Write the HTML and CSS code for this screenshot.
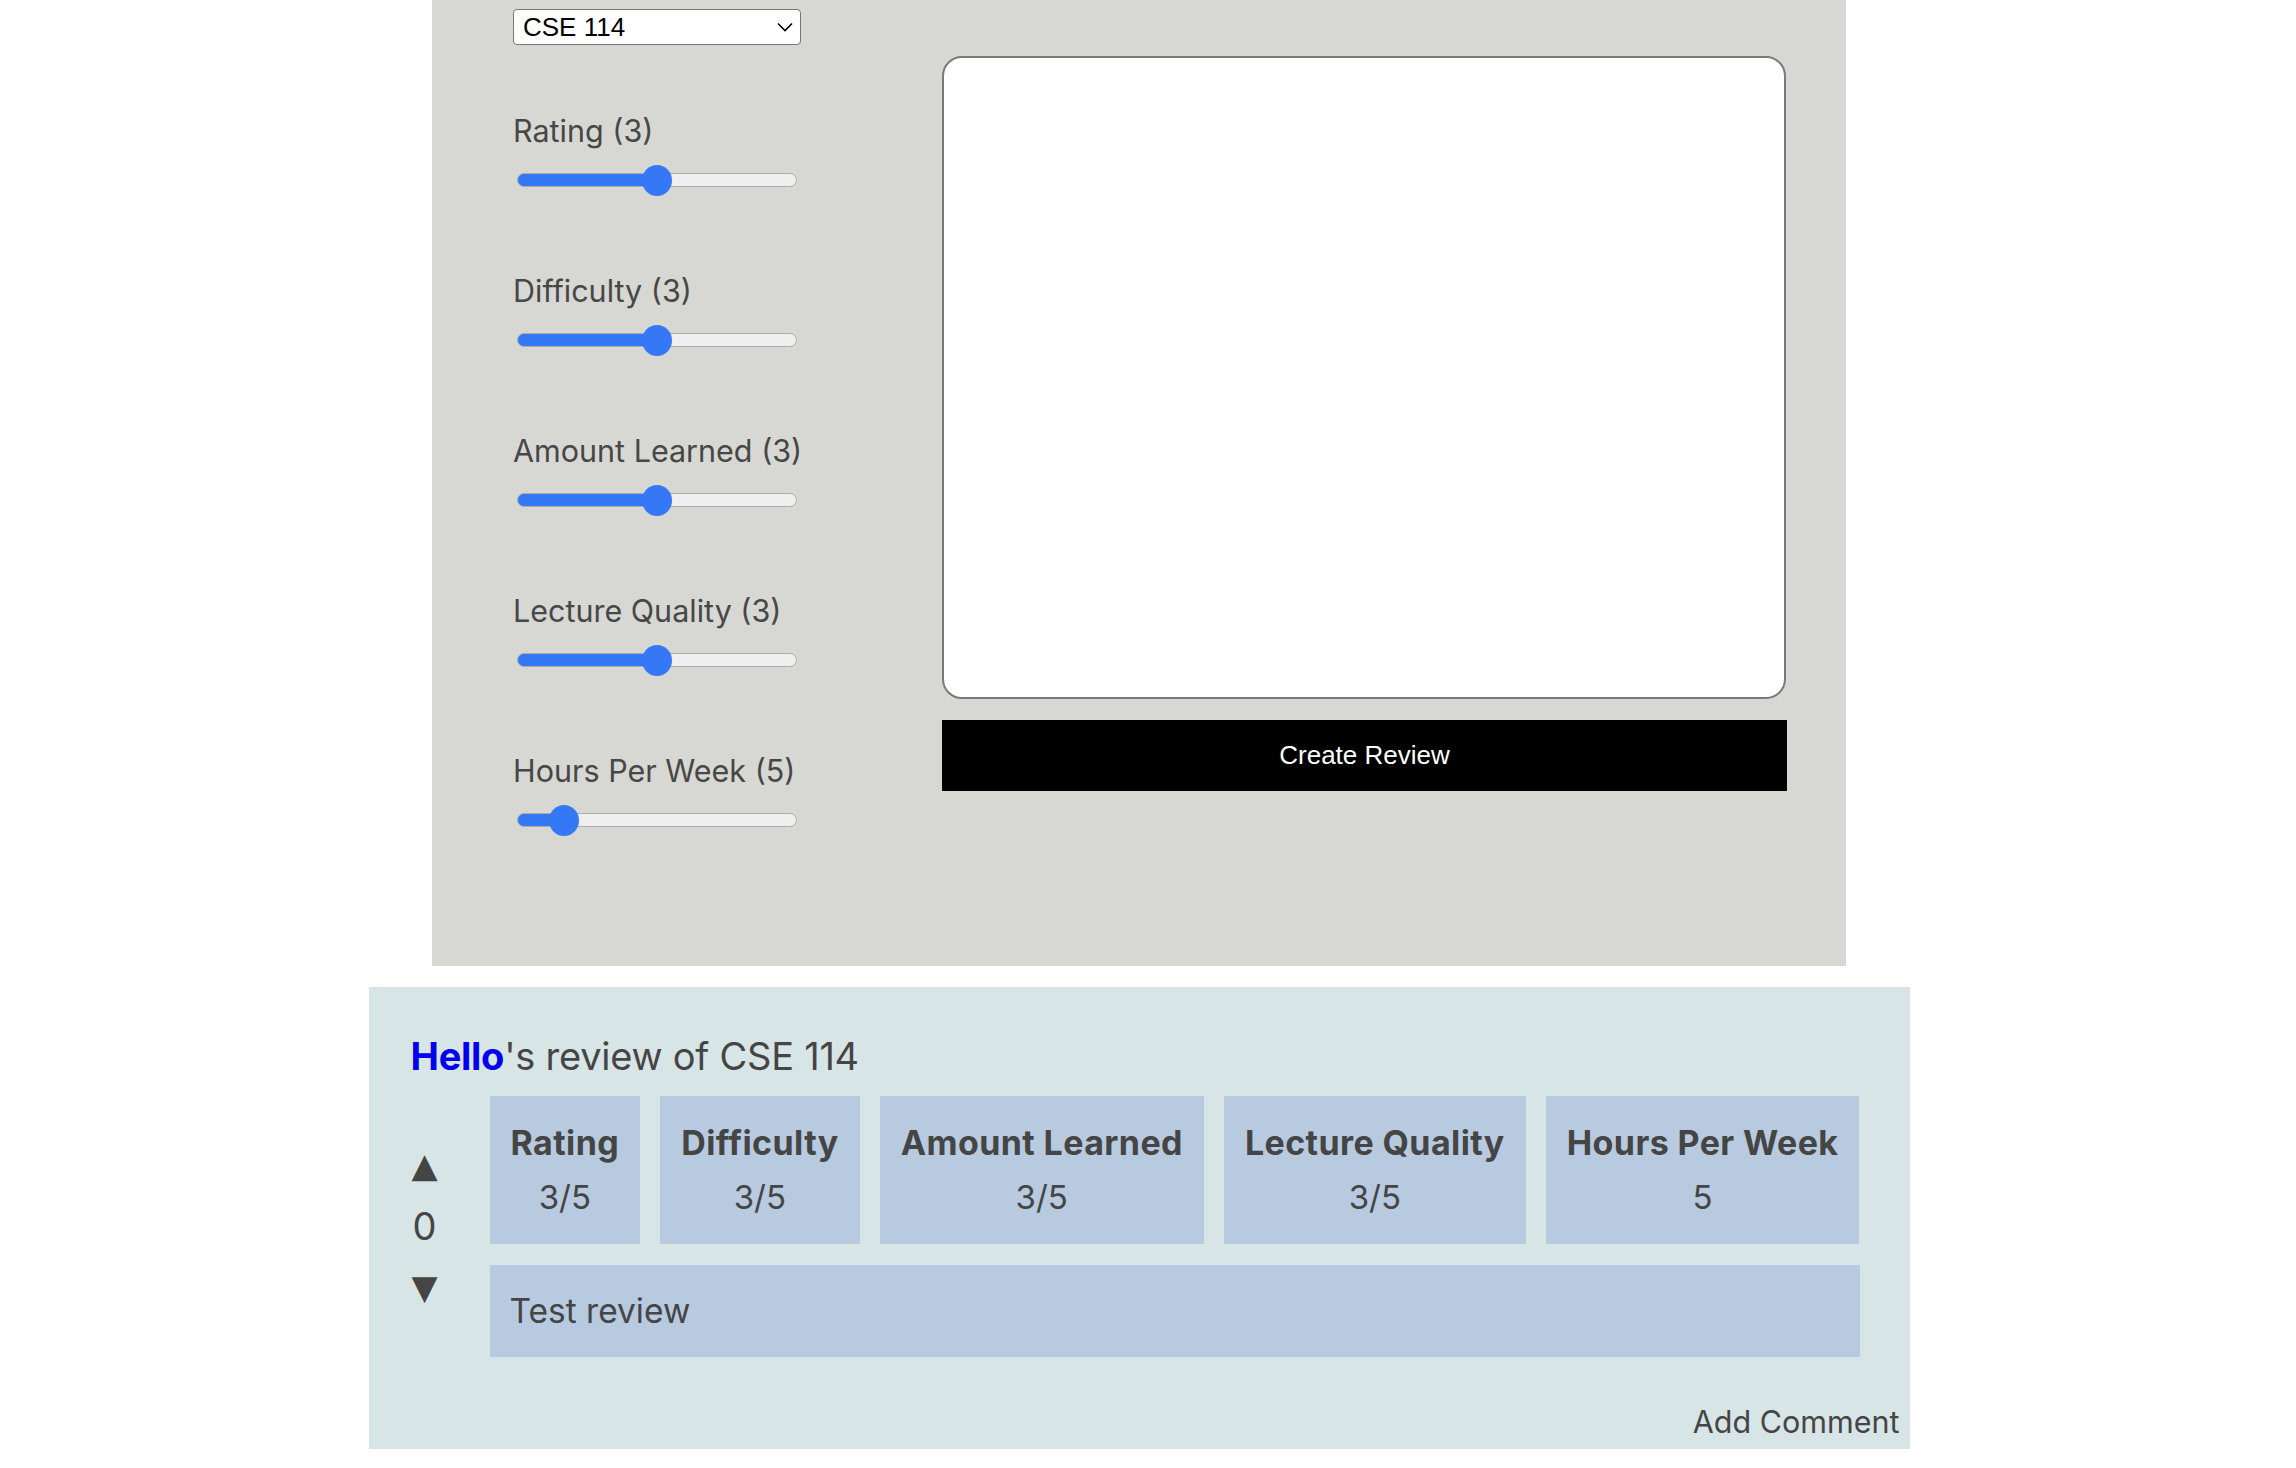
FILE: index.html
```html
<!DOCTYPE html>
<html lang="en">
<head>
<meta charset="utf-8">
<title>Course Review</title>
<link rel="stylesheet" href="styles.css">
</head>
<body>
<div class="page">
  <section class="form-panel">
    <div class="controls">
      <div class="select-wrap">
        <select class="course-select">
          <option>CSE 114</option>
        </select>
        <svg class="chevron" width="16" height="10" viewBox="0 0 16 10"><path d="M1 1.5 L8 8.5 L15 1.5" fill="none" stroke="#000" stroke-width="1.6"/></svg>
      </div>
      <div class="fields">
        <div class="field">
          <label class="field-label">Rating (3)</label>
          <input class="slider" type="range" min="1" max="5" value="3" style="--fill:50%">
        </div>
        <div class="field">
          <label class="field-label">Difficulty (3)</label>
          <input class="slider" type="range" min="1" max="5" value="3" style="--fill:50%">
        </div>
        <div class="field">
          <label class="field-label">Amount Learned (3)</label>
          <input class="slider" type="range" min="1" max="5" value="3" style="--fill:50%">
        </div>
        <div class="field">
          <label class="field-label">Lecture Quality (3)</label>
          <input class="slider" type="range" min="1" max="5" value="3" style="--fill:50%">
        </div>
        <div class="field">
          <label class="field-label">Hours Per Week (5)</label>
          <input class="slider" type="range" min="0" max="40" value="5" style="--fill:16.5%">
        </div>
      </div>
    </div>
    <div class="compose">
      <textarea class="review-text"></textarea>
      <button class="create-btn">Create Review</button>
    </div>
  </section>

  <section class="review-card">
    <h2 class="review-title"><a class="author">Hello</a>'s review of CSE 114</h2>
    <div class="review-body">
      <div class="votes">
        <div class="vote-arrow">&#9650;</div>
        <div class="vote-count">0</div>
        <div class="vote-arrow">&#9660;</div>
      </div>
      <div class="review-content">
        <div class="stats">
          <div class="stat"><div class="stat-label">Rating</div><div class="stat-value">3/5</div></div>
          <div class="stat"><div class="stat-label">Difficulty</div><div class="stat-value">3/5</div></div>
          <div class="stat"><div class="stat-label">Amount Learned</div><div class="stat-value">3/5</div></div>
          <div class="stat"><div class="stat-label">Lecture Quality</div><div class="stat-value">3/5</div></div>
          <div class="stat"><div class="stat-label">Hours Per Week</div><div class="stat-value">5</div></div>
        </div>
        <div class="review-message">Test review</div>
      </div>
    </div>
    <div class="add-comment">Add Comment</div>
  </section>
</div>
</body>
</html>
```

FILE: styles.css
```css
* { box-sizing: border-box; }

body {
  margin: 0;
  background: #ffffff;
  font-family: Inter, "Noto Sans", sans-serif;
  color: #454545;
}

.page {
  width: 2278px;
}

/* ---------- form panel ---------- */
.form-panel {
  width: 1414px;
  margin: 0 auto;
  background: #d7d8d3;
  display: flex;
  padding: 9px 60px 130px 81px;
}

.controls {
  width: 288px;
  display: flex;
  flex-direction: column;
}

.select-wrap {
  position: relative;
  width: 288px;
  height: 36px;
}

.course-select {
  appearance: none;
  -webkit-appearance: none;
  width: 288px;
  height: 36px;
  border: 1px solid #767676;
  border-radius: 4px;
  background: #ffffff;
  font-family: "Liberation Sans", Arial, sans-serif;
  font-size: 26px;
  color: #000;
  padding: 0 0 0 9px;
  margin: 0;
}

.chevron {
  position: absolute;
  right: 8px;
  top: 13px;
  pointer-events: none;
}

.fields {
  margin-top: 66px;
  display: flex;
  flex-direction: column;
  gap: 75px;
}

.field {
  display: flex;
  flex-direction: column;
}

.field-label {
  font-size: 30.5px;
  line-height: 40px;
  white-space: nowrap;
  color: #474747;
}

.slider {
  -webkit-appearance: none;
  appearance: none;
  width: 280px;
  height: 32px;
  margin: 13px 0 0 4px;
  padding: 0;
  background: transparent;
}

.slider::-webkit-slider-runnable-track {
  height: 14px;
  border-radius: 7px;
  border: 1px solid #adadad;
  background: linear-gradient(to right, #3478f6 0, #3478f6 var(--fill), #efefef var(--fill), #efefef 100%);
}

.slider::-webkit-slider-thumb {
  -webkit-appearance: none;
  appearance: none;
  width: 30px;
  height: 31px;
  border-radius: 50%;
  background: #3478f6;
  border: none;
  margin-top: -9.5px;
}

.compose {
  margin-left: 141px;
  width: 844px;
  display: flex;
  flex-direction: column;
}

.review-text {
  margin: 47px 0 0 0;
  width: 844px;
  height: 643px;
  border: 2px solid #7a7a7a;
  border-radius: 20px;
  background: #ffffff;
  resize: none;
}

.create-btn {
  margin-top: 21px;
  width: 845px;
  height: 71px;
  background: #000;
  color: #fff;
  border: none;
  font-family: "Liberation Sans", Arial, sans-serif;
  font-size: 26px;
}

/* ---------- review card ---------- */
.review-card {
  width: 1541px;
  margin: 21px auto 0;
  background: #d8e5e6;
  padding: 49px 10px 7px 42px;
}

.review-title {
  margin: 0 0 20px 0;
  font-size: 38px;
  line-height: 40px;
  font-weight: 400;
  letter-spacing: -0.25px;
  color: #454545;
}

.author {
  color: #0000ee;
  font-weight: 700;
}

.review-body {
  display: flex;
  align-items: center;
  margin-right: 40px;
}

.votes {
  width: 28px;
  margin-right: 51px;
  display: flex;
  flex-direction: column;
  align-items: center;
}

.vote-arrow {
  font-family: "DejaVu Sans", sans-serif;
  font-size: 34px;
  line-height: 61px;
  color: #454545;
}

.vote-count {
  font-size: 38px;
  line-height: 61px;
  color: #454545;
}

.review-content {
  flex: 1;
  display: flex;
  flex-direction: column;
}

.stats {
  display: flex;
  gap: 20px;
}

.stat {
  flex: 1 1 auto;
  background: #b7cadf;
  padding: 20px 20px;
  text-align: center;
}

.stat-label {
  font-size: 34px;
  line-height: 54px;
  font-weight: 700;
  letter-spacing: 0.4px;
  white-space: nowrap;
}

.stat-value {
  font-size: 33px;
  line-height: 54px;
}

.review-message {
  margin-top: 21px;
  background: #b7cadf;
  padding: 20px;
  font-size: 33.5px;
  line-height: 52px;
}

.add-comment {
  margin-top: 45px;
  text-align: right;
  font-size: 30.5px;
  line-height: 40px;
}
```
